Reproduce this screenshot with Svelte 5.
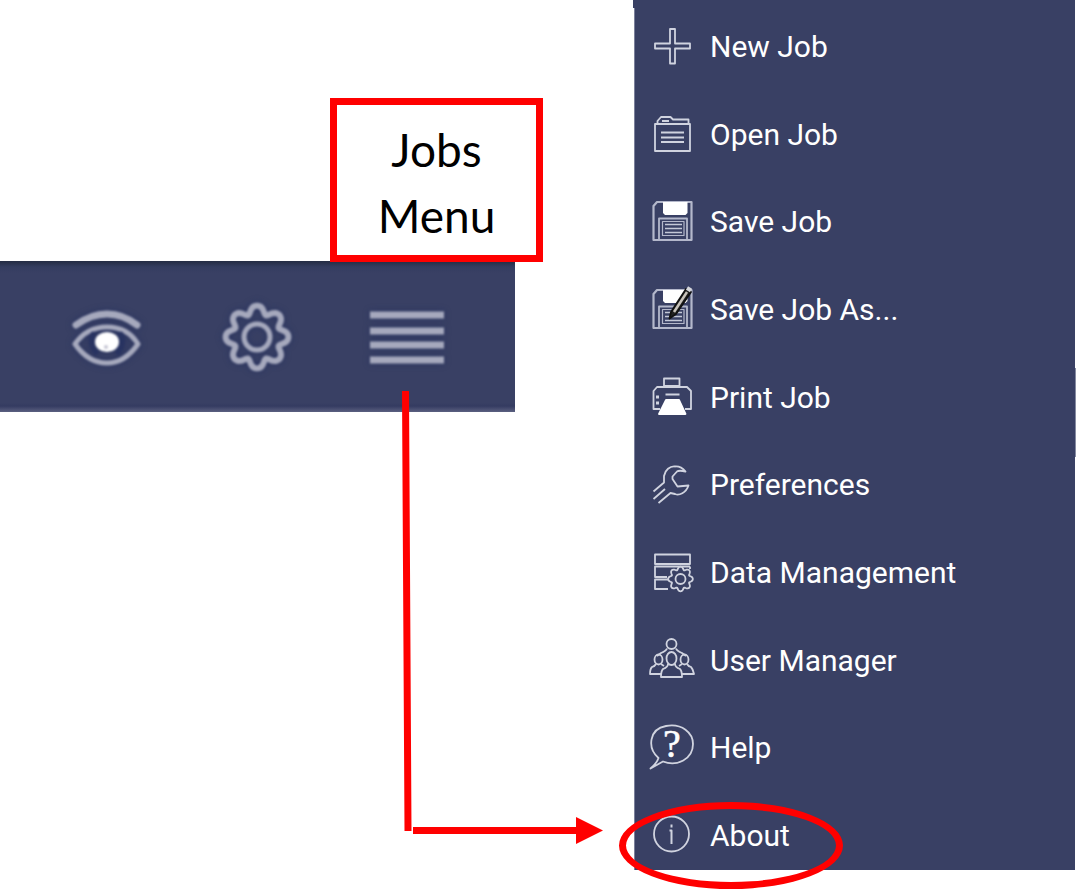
<script>
  let selected = $state('About')

  const jobs = [
    { icon: 'new', label: 'New Job' },
    { icon: 'open', label: 'Open Job' },
    { icon: 'save', label: 'Save Job' },
    { icon: 'saveas', label: 'Save Job As...' },
    { icon: 'print', label: 'Print Job' },
    { icon: 'prefs', label: 'Preferences' },
    { icon: 'data', label: 'Data Management' },
    { icon: 'users', label: 'User Manager' },
    { icon: 'help', label: 'Help' },
    { icon: 'about', label: 'About' }
  ]

  // eight-toothed cog outline with rounded teeth
  function cog(cx, cy, mid, amp) {
    const pts = []
    for (let i = 0; i < 96; i++) {
      const a = (i * Math.PI) / 48
      const r = mid + amp * (Math.cos(8 * a) - 0.15 * Math.cos(16 * a))
      pts.push(`${(cx + r * Math.sin(a)).toFixed(1)} ${(cy - r * Math.cos(a)).toFixed(1)}`)
    }
    return 'M' + pts.join('L') + 'Z'
  }
</script>

{#snippet floppy()}
  <path d="M8 3H42.5V41H4.5V7Z" stroke="#b4b8cb" stroke-width="2.2" />
  <path d="M14 3H38.5V14L36.5 16H16L14 14Z" fill="#fff" stroke="none" />
  <path d="M10 40V19.5H38V40" stroke="#b4b8cb" stroke-width="1.8" />
  <path d="M13.5 36.5V22.5H35V36.5Z" stroke="#b4b8cb" stroke-width="1.2" />
  <path d="M16 25.5H33M16 29.5H33M16 33.5H33" stroke="#c4c8d7" stroke-width="1.5" />
{/snippet}

<main class="figure">
  <section class="screen">
    <p class="callout">Jobs<br />Menu</p>
    <nav class="toolbar" aria-label="Toolbar">
      <button aria-label="View">
        <svg viewBox="0 0 76 76">
          <path d="M7 25Q22 14 38 14T68 25" stroke-width="7" />
          <path d="M6 44C15 31 26 27 38 27S61 31 69 44C60 57 50 63 38 63S15 57 6 44Z" />
          <path d="M24 34Q20 44 27 52M52 34Q56 44 49 52" stroke="#283361" stroke-width="5" />
          <ellipse cx="38" cy="42" rx="11" ry="9" fill="#fff" stroke="#fff" stroke-width="2" />
          <circle cx="37" cy="47" r="2" fill="#c4c5d2" stroke="none" />
        </svg>
      </button>
      <button aria-label="Settings">
        <svg viewBox="0 0 76 76">
          <path d={cog(38, 37, 28, 4)} stroke-width="6" />
          <circle cx="38" cy="37" r="13" />
        </svg>
      </button>
      <button aria-label="Jobs menu">
        <svg viewBox="0 0 76 76">
          <path d="M1 15H75M1 31H75M1 45H75M1 60H75" stroke-width="7" stroke-linecap="butt" />
        </svg>
      </button>
    </nav>
  </section>

  <nav class="menu" aria-label="Jobs">
    {#each jobs as job}
      <button class="item" onclick={() => (selected = job.label)}>
        <svg viewBox="0 0 46 46" aria-hidden="true">
          {#if job.icon === 'new'}
            <path d="M21 5H26V19.5H41V24.5H26V39.5H21V24.5H6V19.5H21Z" />
          {:else if job.icon === 'open'}
            <path d="M6 12H41V39H6ZM8.5 12V9L12 5H21.5L24 7.5H39.5V12M12 20.5H35M12 25.5H35M12 30H35M13 9H20" />
          {:else if job.icon === 'save'}
            {@render floppy()}
          {:else if job.icon === 'saveas'}
            {@render floppy()}
            <path d="M20.5 31.5L22 25L37 2L42 5L27 27Z" fill="#222" stroke="#111" />
            <path d="M25 25L38 5" stroke="#c8c3bb" stroke-width="2.5" />
            <path d="M38 1L42 3.5" stroke="#d6d7dc" stroke-width="4" />
          {:else if job.icon === 'print'}
            <path d="M15 11V3.5H30.5V11ZM11 34H4.5V16L8 12H38L42 16V34H36M16.5 19.5H30.5" />
            <path d="M17 25H30L36.5 39H10Z" fill="#fff" stroke="#fff" />
            <path d="M7 22H10M7 28H10" stroke-width="3" />
          {:else if job.icon === 'prefs'}
            <path d="M4.5 29.5L15 20.5V14C16 8 21 4 26 4.5Q32 4 36.5 9.5Q30 8 28 9.5L23.5 14.5V17L28.5 24.5L39.5 23.5C37 31 30 34 26 32L21.5 31L9.5 41M4.5 37L16 27" />
          {:else if job.icon === 'data'}
            <path d="M6 4.5H41V14H6ZM41 16.5H6V27H18M41 16.5V19M19 29.5H6V39H19" />
            <path d={cog(31.5, 29, 11, 1.5)} fill="#394064" />
            <circle cx="31.5" cy="29" r="5" />
          {:else if job.icon === 'users'}
            <circle cx="22.5" cy="6" r="5" />
            <path d="M18 10.5Q17 13 12 15L8 18M27 10.5Q28 13 33 15L37 18" />
            <ellipse cx="9.5" cy="21.5" rx="4" ry="5" />
            <ellipse cx="35.5" cy="21.5" rx="4" ry="5" />
            <path d="M7 26Q6 28 3 29Q1 31 1 36H12M38 26Q39 28 42 29Q44 31 45 36H33M12 26L15 28M33 26L30 28" />
            <ellipse cx="22.5" cy="20.5" rx="5" ry="6.5" />
            <path d="M19 26Q19 29 14 31Q12 33 12 39H33Q33 33 31 31Q26 29 26 26" />
          {:else if job.icon === 'help'}
            <path d="M9.5 33C-2 23 0 4 17 1C33-2 44 8 44 19C44 34 28 42 14 36.5L1.5 43.5Q8 38 9.5 33Z" />
            <text x="23" y="32" text-anchor="middle">?</text>
          {:else}
            <circle cx="22.5" cy="21" r="17.5" />
            <path d="M20.5 17.5H22.5V31M22.5 11.5V14.5" stroke-width="2" />
          {/if}
        </svg>
        <span>{job.label}</span>
        {#if selected === job.label}
          <i class="ring"></i>
        {/if}
      </button>
    {/each}
  </nav>

  <svg class="arrow" viewBox="0 0 1076 889" preserveAspectRatio="none" aria-hidden="true">
    <path d="M405.5 391L408 831M413 830.5H578" stroke="#f00" stroke-width="7" />
    <path d="M576 817L603 830.5L576 844Z" fill="#f00" />
  </svg>
</main>

<style>
  :global(body) {
    background: #fff;
  }

  .figure {
    position: relative;
    display: grid;
    grid-template-columns: minmax(0, 515fr) minmax(0, 441fr);
    column-gap: 119px;
    align-items: start;
    min-height: 100vh;
    padding-right: 1px;
    box-sizing: border-box;
    overflow: hidden;
  }

  .screen {
    display: flex;
    flex-direction: column;
    padding-top: 98px;
  }

  .callout {
    position: relative;
    z-index: 1;
    align-self: flex-end;
    box-sizing: border-box;
    width: 213px;
    margin: 0 -28px -1px 0;
    padding: 12px 0 6px;
    border: 7px solid #f00;
    background: #fff;
    color: #000;
    font: 46px/66px Lato, sans-serif;
    text-align: center;
  }

  button {
    padding: 0;
    border: 0;
    background: none;
    color: #fff;
    cursor: pointer;
  }

  svg {
    display: block;
    fill: none;
    overflow: visible;
  }

  .toolbar {
    display: flex;
    justify-content: flex-end;
    gap: 74px;
    padding: 39px 70px 36px;
    background: linear-gradient(#242c43, #343d60 6px, #394064 12px, #394064 calc(100% - 9px), #343b61 calc(100% - 6px), #5b6080);
  }

  .toolbar svg {
    width: 76px;
    height: 76px;
    stroke: #a6a9bd;
    stroke-width: 5;
    stroke-linejoin: round;
    stroke-linecap: round;
    filter: drop-shadow(0 0 3px #26315f) blur(1px);
  }

  .menu {
    position: relative;
    display: flex;
    flex-direction: column;
    justify-content: space-between;
    box-sizing: border-box;
    min-height: calc(100vh - 19px);
    padding: 24px 0 11px 14px;
    border-left: 1px solid #7b809b;
    background: #394064;
  }

  /* header edge sticking out above the list */
  .menu::before {
    content: "";
    position: absolute;
    top: 0;
    left: -2px;
    width: 2px;
    height: 8px;
    background: #394064;
  }

  /* scroll thumb */
  .menu::after {
    content: "";
    position: absolute;
    top: 368px;
    right: -1px;
    width: 1px;
    height: 89px;
    background: #878ca2;
  }

  .item {
    position: relative;
    display: flex;
    align-items: center;
    gap: 15px;
    height: 46px;
    font: 30px/46px Roboto, sans-serif;
    text-align: left;
    white-space: nowrap;
  }

  .item svg {
    flex: none;
    width: 46px;
    height: 46px;
    stroke: #d0d3df;
    stroke-width: 1.8;
    stroke-linejoin: round;
  }

  .item text {
    fill: #fff;
    stroke: #fff;
    stroke-width: 0.5;
    font: 40px "Liberation Serif", serif;
  }

  .ring {
    position: absolute;
    top: -11px;
    left: -30px;
    box-sizing: border-box;
    width: 224px;
    height: 87px;
    border: 7px solid #f00;
    border-radius: 50%;
  }

  .arrow {
    position: absolute;
    inset: 0;
    width: 100%;
    height: 100%;
    pointer-events: none;
  }
</style>
